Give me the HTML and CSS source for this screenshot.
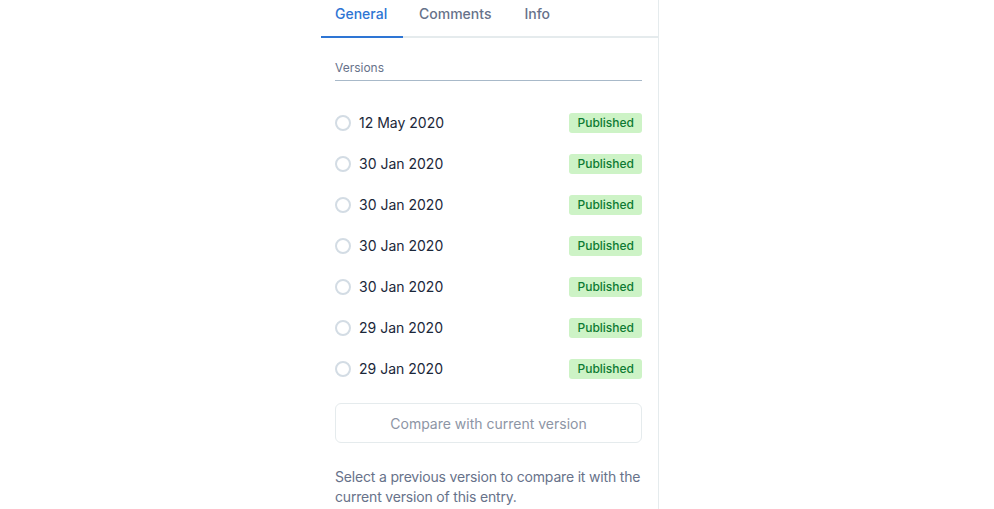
FILE: index.html
```html
<!DOCTYPE html>
<html>
<head>
<meta charset="utf-8">
<link rel="stylesheet" href="styles.css">
</head>
<body>
<div class="panel">
  <nav class="tabs">
    <div class="tab tab-general active">General</div>
    <div class="tab tab-comments">Comments</div>
    <div class="tab tab-info">Info</div>
  </nav>
  <div class="content">
    <div class="section-title">Versions</div>
    <ul class="versions">
      <li class="row"><span class="radio"></span><span class="date">12 May 2020</span><span class="badge">Published</span></li>
      <li class="row"><span class="radio"></span><span class="date">30 Jan 2020</span><span class="badge">Published</span></li>
      <li class="row"><span class="radio"></span><span class="date">30 Jan 2020</span><span class="badge">Published</span></li>
      <li class="row"><span class="radio"></span><span class="date">30 Jan 2020</span><span class="badge">Published</span></li>
      <li class="row"><span class="radio"></span><span class="date">30 Jan 2020</span><span class="badge">Published</span></li>
      <li class="row"><span class="radio"></span><span class="date">29 Jan 2020</span><span class="badge">Published</span></li>
      <li class="row"><span class="radio"></span><span class="date">29 Jan 2020</span><span class="badge">Published</span></li>
    </ul>
    <button class="compare" disabled>Compare with current version</button>
    <p class="hint">Select a previous version to compare it with the current version of this entry.</p>
  </div>
</div>
</body>
</html>
```

FILE: styles.css
```css
html, body {
  margin: 0;
  padding: 0;
  background: #ffffff;
  height: 100%;
  overflow: hidden;
}
body {
  font-family: Inter, "Noto Sans", sans-serif;
  color: #1b273a;
}
.panel {
  margin-left: 321px;
  width: 337px;
  height: 100%;
  border-right: 1px solid #e5ebed;
  box-sizing: content-box;
}
.tabs {
  display: flex;
  border-bottom: 2px solid #e5ebed;
  height: 36px;
}
.tab {
  height: 36px;
  line-height: 28px;
  font-size: 14px;
  font-weight: 500;
  color: #67728a;
}
.tab-general {
  padding: 0 15px 0 14px;
  min-width: 53px;
}
.tab-comments {
  padding: 0 16px 0 16px;
}
.tab-info {
  padding: 0 16px 0 17px;
}
.tab.active {
  color: #2e75d4;
  border-bottom: 2px solid #2e75d4;
}
.content {
  padding: 0 16px 0 14px;
}
.section-title {
  margin-top: 22px;
  font-size: 12px;
  line-height: 16px;
  color: #67728a;
  padding-bottom: 4px;
  border-bottom: 1px solid #a8b9c9;
}
.versions {
  list-style: none;
  margin: 21px 0 0;
  padding: 0;
}
.row {
  display: flex;
  align-items: center;
  height: 41px;
}
.radio {
  width: 12px;
  height: 12px;
  border: 2px solid #d3dce4;
  border-radius: 50%;
  margin-right: 8px;
  flex: none;
}
.date {
  font-size: 14px;
  line-height: 20px;
  color: #1b273a;
  flex: 1;
}
.badge {
  background: #cdf3c6;
  color: #0d7a32;
  font-size: 12px;
  line-height: 20px;
  padding: 0 8px;
  border-radius: 3px;
  font-weight: 500;
}
.compare {
  display: block;
  width: 100%;
  height: 40px;
  margin-top: 14px;
  background: #ffffff;
  border: 1px solid #e5ebed;
  border-radius: 6px;
  font-family: inherit;
  font-size: 14px;
  color: #8d95a5;
}
.hint {
  margin: 24px 0 0;
  font-size: 14px;
  line-height: 20px;
  letter-spacing: -0.18px;
  color: #67728a;
}
```
